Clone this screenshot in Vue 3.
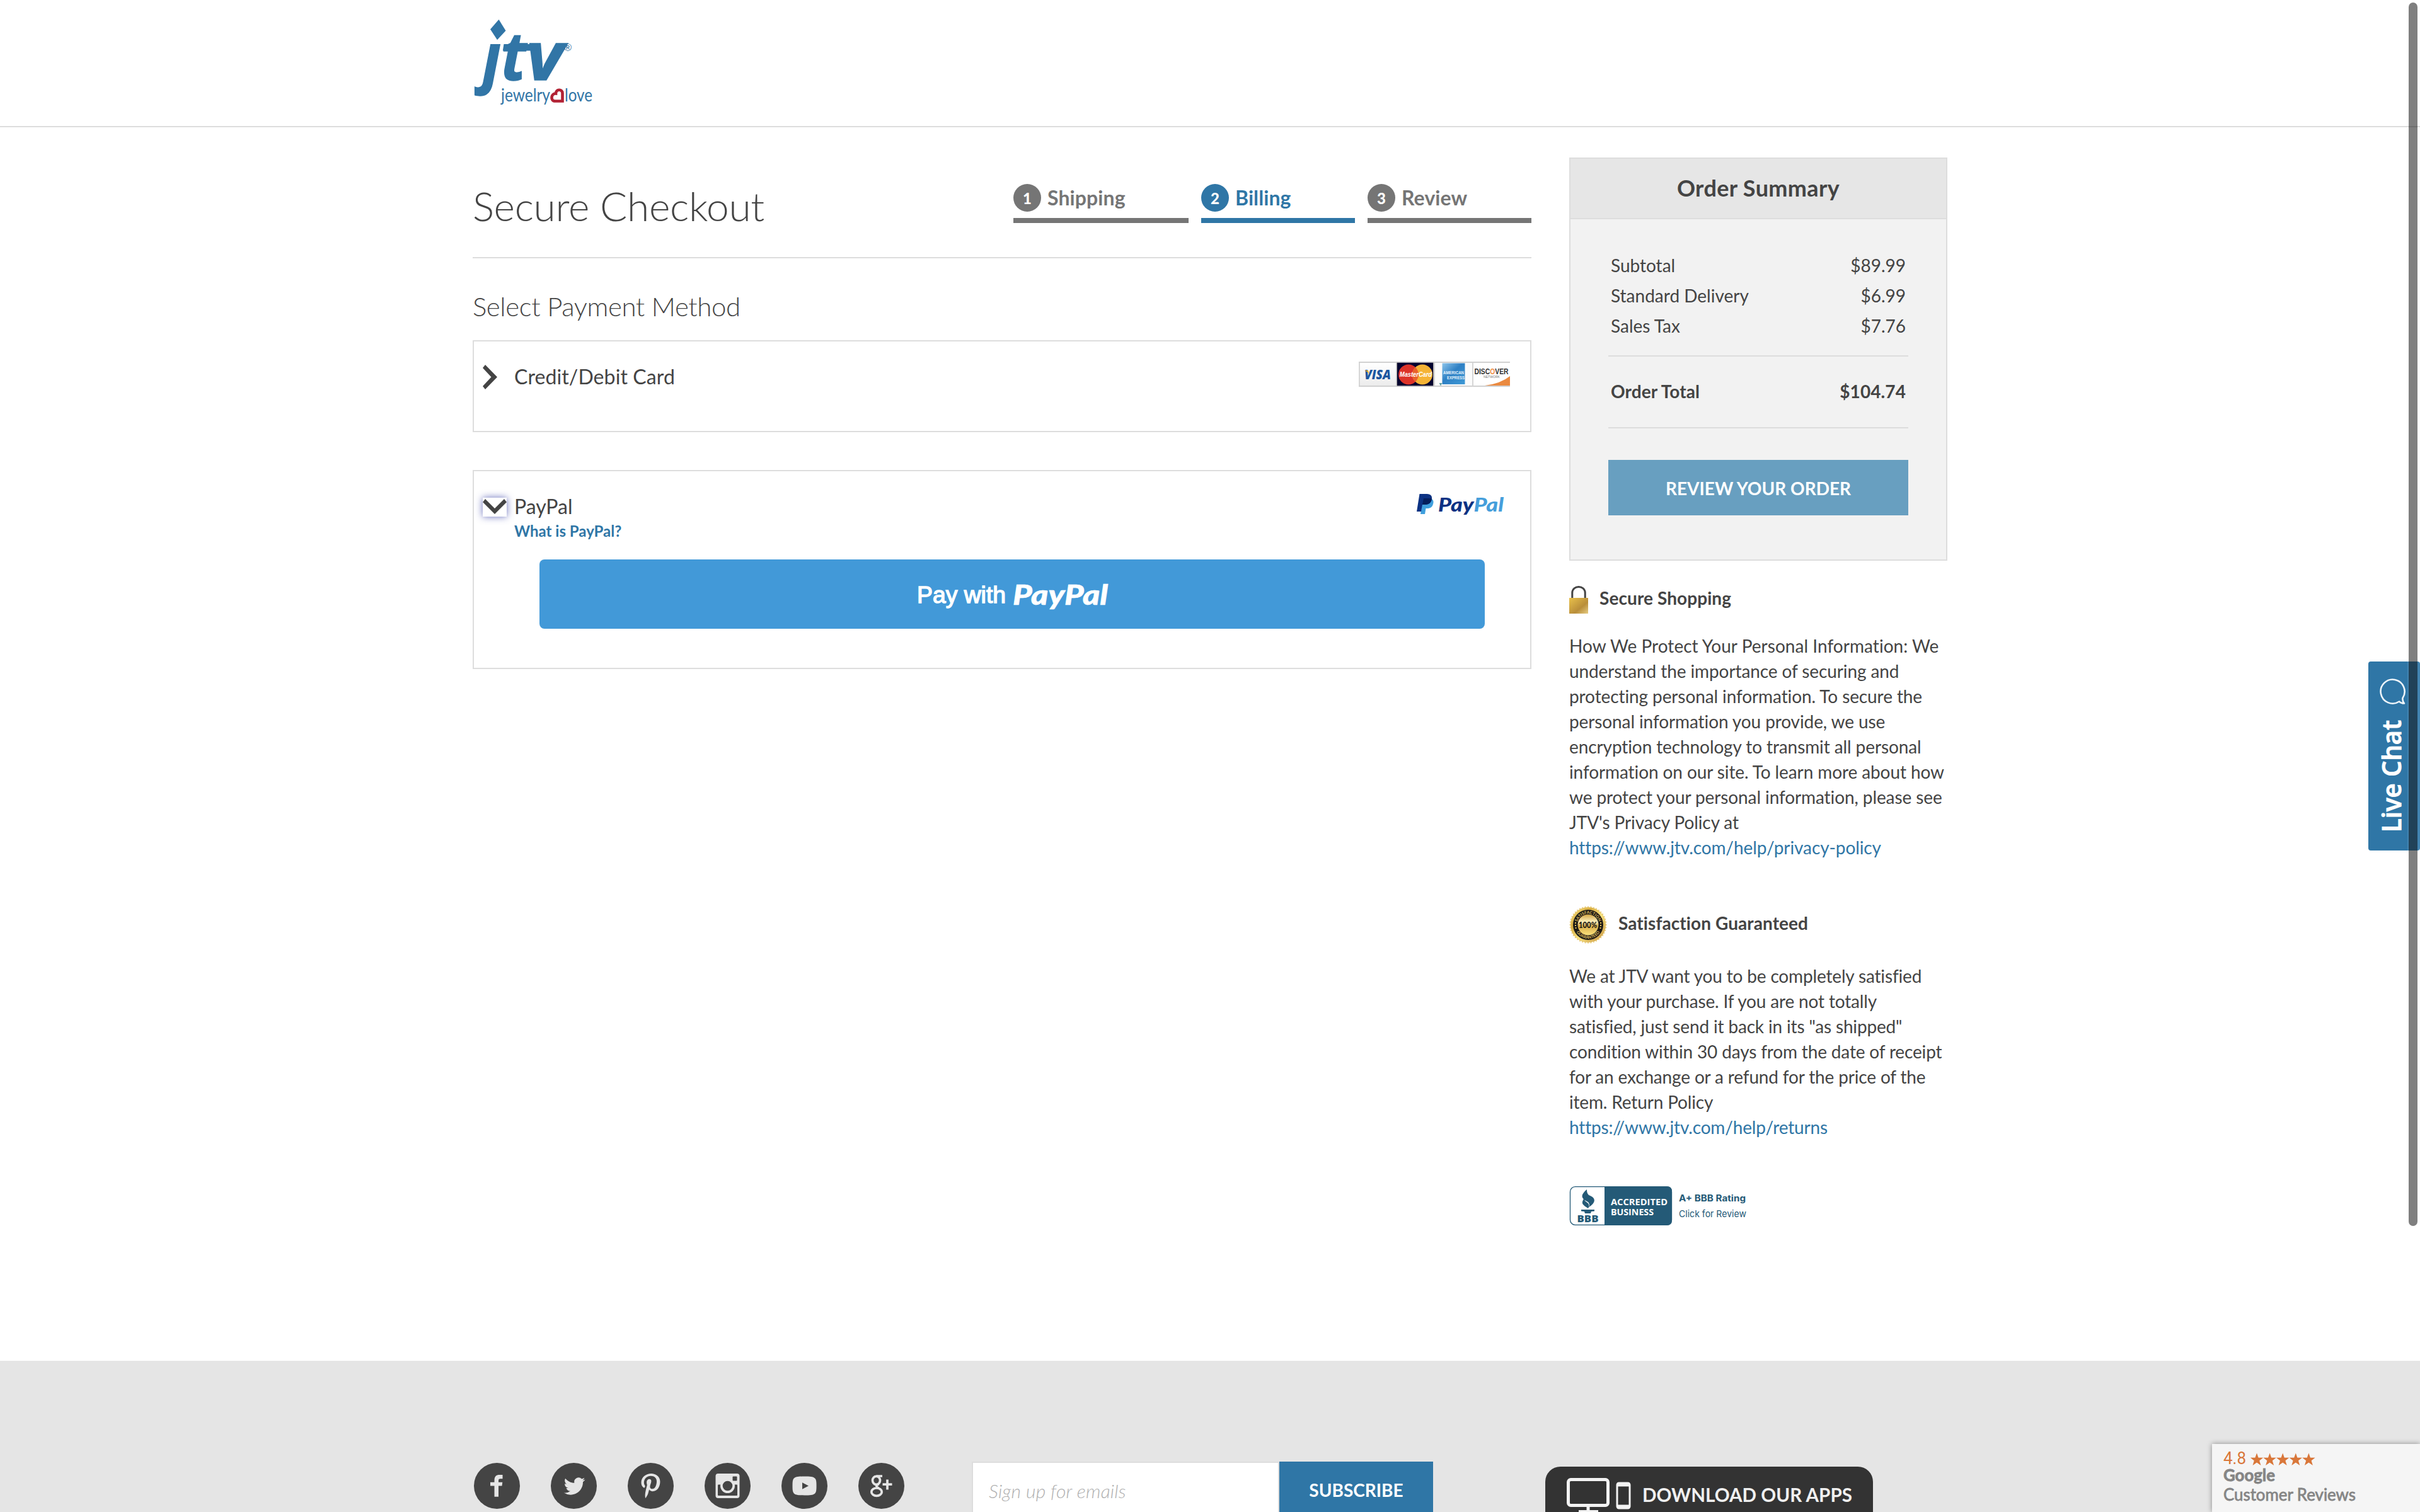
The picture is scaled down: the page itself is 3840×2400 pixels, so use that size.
<script setup>
const steps = [
  { n: 1, label: 'Shipping', cls: 'step-shipping' },
  { n: 2, label: 'Billing', cls: 'step-billing' },
  { n: 3, label: 'Review', cls: 'step-review' },
]
const lines = [
  { label: 'Subtotal', value: '$89.99' },
  { label: 'Standard Delivery', value: '$6.99' },
  { label: 'Sales Tax', value: '$7.76' },
]
const sealTeeth = Array.from({ length: 40 }, (_, i) => i * 9)
const starXs = [0, 20.6, 41.2, 61.8, 82.4]
</script>

<template>
  <div class="page">
    <header class="site-header">
      <svg class="logo" viewBox="0 0 200 150" aria-label="jtv jewelry love">
        <defs>
          <clipPath id="stem"><rect x="-10" y="41" width="80" height="90" /></clipPath>
        </defs>
        <path d="M38.500 2L49.500 19.800L36 34.300L25 17.500Z" fill="#3175a6" />
        <g class="logo-word">
          <text x="13" y="98" clip-path="url(#stem)" textLength="29" lengthAdjust="spacingAndGlyphs">j</text>
          <text x="42" y="98" textLength="40" lengthAdjust="spacingAndGlyphs">t</text>
          <text x="82" y="98" textLength="59" lengthAdjust="spacingAndGlyphs">v</text>
        </g>
        <path d="M46.500 41H100L98 51.500H44.800Z" fill="#3175a6" />
        <text class="logo-reg" x="142" y="52" textLength="12" lengthAdjust="spacingAndGlyphs">®</text>
        <text class="logo-tag" x="42" y="132" textLength="78" lengthAdjust="spacingAndGlyphs">jewelry</text>
        <path d="M139.500 131.500V119C139.500 112 129 112 129 119.500C121.500 119 119.500 131.500 128 131.500Z" fill="#fff" stroke="#b22234" stroke-width="4.600" />
        <text class="logo-tag" x="143" y="132" textLength="44" lengthAdjust="spacingAndGlyphs">love</text>
      </svg>
    </header>

    <div class="content">
      <main class="checkout">
        <div class="title-row">
          <h1>Secure Checkout</h1>
          <ol class="steps">
            <li v-for="s in steps" :key="s.n" :class="['step', s.cls]">
              <div class="step-head"><span class="badge">{{ s.n }}</span><span>{{ s.label }}</span></div>
            </li>
          </ol>
        </div>

        <h2>Select Payment Method</h2>

        <section class="method card-method">
          <span class="toggle">
            <svg width="23" height="39" viewBox="0 0 23 39"><path d="M4 0L23 19.500L4 39L0 34L13.500 19.500L0 5Z" fill="#444" /></svg>
          </span>
          <span class="method-name">Credit/Debit Card</span>
          <svg class="cards" width="240" height="40" viewBox="0 0 240 40">
            <defs>
              <linearGradient id="amex" x1="0" y1="0" x2="1" y2="1">
                <stop offset="0" stop-color="#8cc4ea" /><stop offset=".45" stop-color="#2f80c4" /><stop offset="1" stop-color="#3f9ad6" />
              </linearGradient>
              <linearGradient id="visabg" x1="0" y1="0" x2="0" y2="1">
                <stop offset="0" stop-color="#fff" /><stop offset="1" stop-color="#ececec" />
              </linearGradient>
            </defs>
            <rect width="240" height="40" fill="#d6d6d6" />
            <rect x="2" y="2" width="57" height="36" fill="url(#visabg)" />
            <text x="9" y="28" class="visa" textLength="42" lengthAdjust="spacingAndGlyphs">VISA</text>
            <path d="M9 14H15L17 21Q14 15 9 14Z" fill="#f0b323" />
            <rect x="60" width="59" height="40" fill="#a9a6a3" />
            <rect x="61" y="1" width="57" height="38" fill="#04032e" />
            <circle cx="79" cy="20.500" r="16" fill="#dc3329" />
            <circle cx="101" cy="20.500" r="16" fill="#f5b335" />
            <path d="M90 9A16 16 0 0 1 90 32A16 16 0 0 1 90 9Z" fill="#e9622c" />
            <text x="65" y="24" class="mc" textLength="51" lengthAdjust="spacingAndGlyphs">MasterCard</text>
            <rect x="121" y="2" width="59" height="36" fill="#fbfbfb" />
            <rect x="132.500" y="2.500" width="36" height="33.500" fill="url(#amex)" />
            <text x="134" y="20" class="amex" textLength="33" lengthAdjust="spacingAndGlyphs">AMERICAN</text>
            <text x="140" y="28" class="amex" textLength="28" lengthAdjust="spacingAndGlyphs">EXPRESS</text>
            <path d="M127.500 34H132.500L130 38.500Z" fill="#63a0a3" />
            <rect x="182" y="2" width="58" height="36" fill="#fff" />
            <path d="M200 38Q225 35 240 23V38Z" fill="#ea8a40" />
            <text x="183.500" y="20" class="disc" textLength="54" lengthAdjust="spacingAndGlyphs">DISC<tspan fill="#f09048">O</tspan>VER</text>
            <text x="198" y="26" class="net" textLength="26" lengthAdjust="spacingAndGlyphs">NETWORK</text>
            <path d="M0 1H240M0 39H240" stroke="#cfcfcf" stroke-width="1.500" />
          </svg>
        </section>

        <section class="method paypal-method">
          <div class="paypal-head">
            <span class="toggle">
              <span class="focus-box">
                <svg width="38" height="24" viewBox="0 0 38 24"><path d="M4 0L19 15L34 0L38 5L19 24L0 5Z" fill="#444" /></svg>
              </span>
            </span>
            <div class="method-text">
              <div class="method-name">PayPal</div>
              <a class="what">What is PayPal?</a>
            </div>
            <svg class="pp-logo" width="140" height="42" viewBox="0 0 140 42">
              <path d="M10 7H21C27 8 27.500 13 25.500 17.500C24 21.500 21 23 16.500 23H14.500L13 32H6Z" fill="#3f9fdd" />
              <path d="M4.500 0H16C22.500 0 25 3.500 23.800 9C22.500 14.500 19 17 13 17H9L7 28H0Z" fill="#0c3283" />
              <path d="M11 7H24C23.500 13.500 19.500 17 13 17H9Z" fill="#051f5c" />
              <text x="34" y="28" class="pp-word" textLength="104" lengthAdjust="spacingAndGlyphs"><tspan fill="#0c3283">Pay</tspan><tspan fill="#459edb">Pal</tspan></text>
            </svg>
          </div>
          <button class="pay-button" type="button">
            <svg width="304" height="56" viewBox="0 0 304 56">
              <text class="pay-with" x="1" y="42" textLength="141" lengthAdjust="spacingAndGlyphs">Pay with</text>
              <text class="pay-brand" x="153" y="44.500" textLength="151" lengthAdjust="spacingAndGlyphs">PayPal</text>
            </svg>
          </button>
        </section>
      </main>

      <aside class="sidebar">
        <section class="summary">
          <h3>Order Summary</h3>
          <div class="summary-body">
            <div class="rows">
              <div v-for="l in lines" :key="l.label" class="row"><span>{{ l.label }}</span><span>{{ l.value }}</span></div>
            </div>
            <div class="row total"><span>Order Total</span><span>$104.74</span></div>
            <button class="review-button" type="button">REVIEW YOUR ORDER</button>
          </div>
        </section>

        <div class="trust secure">
          <svg width="30" height="44" viewBox="0 0 30 44">
            <defs>
              <linearGradient id="lock" x1="0" y1="0" x2="1" y2="1">
                <stop offset="0" stop-color="#e9c14b" /><stop offset=".62" stop-color="#b98e3a" /><stop offset="1" stop-color="#e6cc83" />
              </linearGradient>
            </defs>
            <path d="M4.800 20V11C4.800-1.800 25.200-1.800 25.200 11V20" fill="none" stroke="#444" stroke-width="3" />
            <rect y="19" width="30" height="25" fill="url(#lock)" />
          </svg>
          <h4>Secure Shopping</h4>
        </div>
        <p class="secure-copy"><span class="lead">How We Protect Your Personal Information: We</span><br />understand the importance of securing and<br />protecting personal information. To secure the<br />personal information you provide, we use<br />encryption technology to transmit all personal<br />information on our site. To learn more about how<br />we protect your personal information, please see<br />JTV's Privacy Policy at<br /><a>https://www.jtv.com/help/privacy-policy</a></p>

        <div class="trust satisfaction">
          <svg width="60" height="60" viewBox="-30 -30 60 60">
            <defs>
              <linearGradient id="gold" x1="0" y1="0" x2="1" y2="1">
                <stop offset="0" stop-color="#fbe88f" /><stop offset=".3" stop-color="#d9ad3f" /><stop offset=".55" stop-color="#f8e27e" /><stop offset="1" stop-color="#c08a3a" />
              </linearGradient>
              <linearGradient id="goldface" x1="0" y1="0" x2="0" y2="1">
                <stop offset="0" stop-color="#d2a544" /><stop offset=".35" stop-color="#fdf0bd" /><stop offset=".55" stop-color="#d8ac4a" /><stop offset="1" stop-color="#fbe27b" />
              </linearGradient>
              <path id="arcTop" d="M-17.500 0A17.500 17.500 0 0 1 17.500 0" />
              <path id="arcBottom" d="M-22 0A22 22 0 0 0 22 0" />
            </defs>
            <circle r="28" fill="url(#gold)" />
            <path v-for="a in sealTeeth" :key="a" d="M-2 -27.500L0 -30L2 -27.500Z" fill="#e8cb7a" :transform="`rotate(${a})`" />
            <circle r="24" fill="#1d1a16" />
            <circle r="16.500" fill="url(#goldface)" />
            <text class="seal-ring"><textPath href="#arcTop" startOffset="50%">SATISFACTION</textPath></text>
            <text class="seal-ring"><textPath href="#arcBottom" startOffset="50%">GUARANTEED</textPath></text>
            <path d="M-21 -4h2v2h-2zM-21 0h2v2h-2zM-20.500 4h2v2h-2zM19 -4h2v2h-2zM19 0h2v2h-2zM18.500 4h2v2h-2z" fill="#e4c05a" />
            <text class="seal-num" x="-15" y="5" textLength="29" lengthAdjust="spacingAndGlyphs">100%</text>
          </svg>
          <h4>Satisfaction Guaranteed</h4>
        </div>
        <p class="satisfaction-copy">We at JTV want you to be completely satisfied<br />with your purchase. If you are not totally<br />satisfied, just send it back in its "as shipped"<br />condition within 30 days from the date of receipt<br />for an exchange or a refund for the price of the<br />item. Return Policy<br /><a>https://www.jtv.com/help/returns</a></p>

        <svg class="bbb" width="290" height="62" viewBox="0 0 290 62">
          <rect x="1.500" y=".7" width="161" height="60.600" rx="8" fill="#fff" stroke="#245a77" stroke-width="1.300" />
          <path d="M56 0H155Q163 0 163 8V54Q163 62 155 62H56Z" fill="#245a77" />
          <path d="M29 5C17 15 21 20 31 25C35 30 32 33 31 34C45 25 43 18 32 14C29 11 29 8 29 5Z" fill="#245a77" transform="translate(-1)" />
          <path d="M24 19C17 28 23 30 30 35C33 30 31 27 26 24C24 22 24 21 24 19Z" fill="#245a77" />
          <path d="M19 37H40V39.500L35 40L34 43H25L24 40L19 39.500Z" fill="#245a77" />
          <text class="bbb-name" x="12.500" y="57" textLength="34" lengthAdjust="spacingAndGlyphs">BBB</text>
          <text class="bbb-acc" x="66" y="30" textLength="90" lengthAdjust="spacingAndGlyphs">ACCREDITED</text>
          <text class="bbb-acc" x="66" y="46" textLength="68" lengthAdjust="spacingAndGlyphs">BUSINESS</text>
          <text class="bbb-rating" x="174" y="23.500" textLength="106" lengthAdjust="spacingAndGlyphs">A+ BBB Rating</text>
          <text class="bbb-click" x="174" y="49" textLength="107" lengthAdjust="spacingAndGlyphs">Click for Review</text>
        </svg>
      </aside>
    </div>

    <footer class="footer">
      <div class="social">
        <svg viewBox="-36.500 -36.500 73 73"><circle r="36.500" /><path d="M-4 17.300V0h-6.500v-5.700h6.500v-3.300c0-6 3-8.500 8-8.500h5v6.300h-3.500c-2.300 0-3 1-3 3v2.500h6.300l-.8 5.700h-5.500v17.300z" /></svg>
        <svg viewBox="-36.500 -36.500 73 73"><circle r="36.500" /><path transform="translate(-15.700 -16.300) scale(1.400)" d="M23.953 4.570a10 10 0 01-2.825.775 4.958 4.958 0 002.163-2.723c-.951.555-2.005.959-3.127 1.184a4.920 4.920 0 00-8.384 4.482C7.690 8.095 4.067 6.130 1.640 3.162a4.822 4.822 0 00-.666 2.475c0 1.710.870 3.213 2.188 4.096a4.904 4.904 0 01-2.228-.616v.06a4.923 4.923 0 003.946 4.827 4.996 4.996 0 01-2.212.085 4.936 4.936 0 004.604 3.417 9.867 9.867 0 01-6.102 2.105c-.39 0-.779-.023-1.170-.067a13.995 13.995 0 007.557 2.209c9.053 0 13.998-7.496 13.998-13.985 0-.21 0-.42-.015-.63A9.935 9.935 0 0024 4.590z" /></svg>
        <svg viewBox="-36.500 -36.500 73 73"><circle r="36.500" /><path transform="translate(-15 -20) scale(.078)" d="M204 6.500C101.400 6.500 0 74.900 0 185.600 0 256 39.600 296 63.600 296c9.900 0 15.600-27.600 15.600-35.400 0-9.300-23.700-29.100-23.700-67.800 0-80.400 61.200-137.400 140.400-137.400 68.100 0 118.500 38.700 118.500 109.800 0 53.100-21.300 152.700-90.300 152.700-24.900 0-46.200-18-46.200-43.800 0-37.800 26.400-74.400 26.400-113.400 0-66.200-93.900-54.200-93.900 25.800 0 16.800 2.100 35.400 9.600 50.700-13.800 59.400-42 147.900-42 209.100 0 18.900 2.700 37.500 4.500 56.400 3.400 3.800 1.700 3.400 6.900 1.500 50.400-69 48.600-82.500 71.400-172.800 12.300 23.400 44.100 36 69.300 36 106.200 0 153.900-103.500 153.900-196.800C384 71.300 298.200 6.500 204 6.500z" /></svg>
        <svg viewBox="-36.500 -36.500 73 73"><circle r="36.500" /><rect class="lite" x="-19" y="-19.500" width="38" height="39" rx="4" /><rect class="dark" x="-15.500" y="-2" width="31" height="17.500" rx="1" /><circle class="lite" r="11.500" /><circle class="dark" r="7.800" /><rect class="dark" x="8" y="-15" width="7" height="7" rx="1" /></svg>
        <svg viewBox="-36.500 -36.500 73 73"><circle r="36.500" /><path d="M-19 0C-19-13-18-15 0-15S19-13 19 0S18 15 0 15S-19 13-19 0Z" /><path class="dark" d="M-3.500 -5.200L6.500 0L-3.500 5.200Z" /></svg>
        <svg viewBox="-36.500 -36.500 73 73"><circle r="36.500" /><g class="line"><ellipse cx="-8" cy="-8.700" rx="6" ry="6.500" /><ellipse cx="-7.500" cy="9.700" rx="8.200" ry="6.200" /><path d="M-8 -15.500H1.500M-4 -3C-10 0-8 1-4.500 3.800M2 -2.300H17M9.500 -10V6" /></g></svg>
      </div>
      <form class="signup">
        <div class="email">Sign up for emails</div>
        <button type="button">SUBSCRIBE</button>
      </form>
      <div class="apps">
        <svg width="104" height="72" viewBox="0 0 104 72" fill="none" stroke="#f3f3f3">
          <rect x="2.500" y="2.500" width="63" height="41" rx="4" stroke-width="5" />
          <path d="M34 44V52M19 53.500H50" stroke-width="5" />
          <rect x="80" y="8" width="20" height="40" rx="3" stroke-width="3" />
          <path d="M80 10.500H100M80 45.500H100" stroke-width="6" />
        </svg>
        <svg width="340" height="44" viewBox="0 0 340 44"><text class="apps-text" x="-2" y="38" textLength="333" lengthAdjust="spacingAndGlyphs">DOWNLOAD OUR APPS</text></svg>
      </div>
    </footer>

    <div class="reviews">
      <svg width="330" height="108" viewBox="0 0 330 108">
        <text class="score" x="18" y="32" textLength="36" lengthAdjust="spacingAndGlyphs">4.8</text>
        <path v-for="x in starXs" :key="x" :transform="`translate(${71 + x} 24.500)`" fill="#d9773a" d="M-10.200 -2.800H-2.600L0 -10L2.600 -2.800H10.200L4.200 1.900L6.500 9.500L0 5L-6.500 9.500L-4.200 1.900Z" />
        <text class="rev bold" x="18" y="59" textLength="82" lengthAdjust="spacingAndGlyphs">Google</text>
        <text class="rev" x="18" y="90" textLength="210" lengthAdjust="spacingAndGlyphs">Customer Reviews</text>
      </svg>
    </div>

    <div class="chat">
      <svg width="82" height="300" viewBox="0 0 82 300">
        <path d="M54.500 58A19 19 0 1 0 49 63.500C51 65.500 54 66.500 57 66.500C55 64 54 61 54.500 58Z" fill="none" stroke="#eef5fa" stroke-width="2.600" stroke-linejoin="round" />
        <text transform="translate(52 271) rotate(-90)" textLength="178" lengthAdjust="spacingAndGlyphs">Live Chat</text>
      </svg>
    </div>
    <div class="scrollbar"></div>
  </div>
</template>

<style>
body {
  margin: 0;
  background: #fff;
}
</style>

<style scoped>
.page {
  position: relative;
  width: 3840px;
  height: 2400px;
  overflow: hidden;
  background: #fff;
  color: #444;
  font-family: Lato, "Liberation Sans", sans-serif;
  font-size: 28px;
  line-height: 40px;
}
.page * { box-sizing: border-box; }
h1, h2, h3, h4, p, ol { margin: 0; padding: 0; }
svg { display: block; flex: none; overflow: visible; }
button { border: 0; padding: 0; margin: 0; font-family: inherit; }

.site-header {
  height: 202px;
  border-bottom: 2px solid #ddd;
  padding: 29px 0 0 753px;
}
.logo { width: 200px; height: 150px; }
.logo-word {
  font: italic 700 105px "Noto Sans", sans-serif;
  fill: #3175a6;
  stroke: #3175a6;
  stroke-width: 1.5px;
}
.logo-reg { font: 400 16px "Liberation Sans", sans-serif; fill: #3175a6; }
.logo-tag { font: 400 28px Lato, sans-serif; fill: #3175a6; }

.content {
  display: flex;
  gap: 60px;
  height: 1958px;
  padding-left: 750px;
}
.checkout { width: 1680px; }
.title-row {
  display: flex;
  justify-content: space-between;
  align-items: flex-start;
  height: 208px;
  padding-top: 85px;
  border-bottom: 2px solid #ddd;
}
h1 { font-size: 64px; font-weight: 300; line-height: 80px; letter-spacing: -.3px; }
.steps { display: flex; gap: 20px; margin-top: 5px; list-style: none; }
.step {
  height: 62px;
  border-bottom: 8px solid #757575;
  color: #757575;
  font-size: 32px;
  font-weight: 700;
}
.step-shipping { width: 278px; }
.step-billing { width: 244px; color: #2f76a6; border-color: #2f76a6; }
.step-review { width: 260px; }
.step-head { display: flex; align-items: center; gap: 10px; height: 44px; letter-spacing: .1px; }
.badge {
  width: 44px;
  height: 44px;
  border-radius: 50%;
  background: #757575;
  color: #fff;
  font-size: 24px;
  font-weight: 900;
  line-height: 45px;
  text-align: center;
}
.step-billing .badge { background: #2f76a6; }
h2 { margin-top: 51px; font-size: 42px; font-weight: 300; line-height: 50px; letter-spacing: -.4px; }

.method { border: 2px solid #ddd; font-size: 32px; }
.card-method {
  display: flex;
  align-items: flex-start;
  height: 146px;
  margin-top: 29px;
  padding: 32px 32px 0 14px;
}
.toggle { flex: none; width: 50px; padding-top: 5px; }
.card-method .method-name { margin-top: 4px; letter-spacing: .1px; }
.cards { margin-left: auto; }
.visa { font: italic 900 21px "Open Sans", sans-serif; fill: #1b56a0; }
.mc { font: italic 700 11px "Liberation Sans", sans-serif; fill: #fff; }
.amex { font: 700 8px "Liberation Sans", sans-serif; fill: #e5f2fb; }
.disc { font: 700 12.5px "Liberation Sans", sans-serif; fill: #333; }
.net { font: 400 5px "Liberation Sans", sans-serif; fill: #777; }
.paypal-method { height: 316px; margin-top: 60px; padding: 36px 0 0 14px; }
.paypal-head { display: flex; align-items: flex-start; }
.paypal-head .toggle { padding-top: 6px; }
.focus-box {
  display: block;
  width: 38px;
  height: 30px;
  padding-top: 2px;
  background: #fff;
  box-shadow: 0 0 12px rgba(40, 50, 160, .7);
}
.what {
  display: block;
  margin-top: 3px;
  color: #2f76a6;
  font-size: 24px;
  font-weight: 700;
  line-height: 32px;
}
.pp-logo { margin: 0 40px 0 auto; }
.pp-word { font: italic 900 31px Lato, sans-serif; }
.pay-button {
  display: flex;
  justify-content: center;
  width: 1500px;
  height: 110px;
  margin: 29px 0 0 90px;
  padding-top: 27px;
  border-radius: 8px;
  background: #4299d8;
}
.pay-with { font: 400 36px "Liberation Sans", sans-serif; fill: #fff; stroke: #fff; stroke-width: 1.4px; }
.pay-brand { font: italic 900 44px Lato, sans-serif; fill: #fff; stroke: #fff; stroke-width: .6px; }

.sidebar { width: 600px; padding-top: 48px; }
.summary { height: 640px; border: 2px solid #ddd; background: #f2f2f2; }
h3 {
  height: 96px;
  border-bottom: 2px solid #ddd;
  background: #e6e6e6;
  font-size: 36px;
  font-weight: 700;
  letter-spacing: .35px;
  line-height: 93px;
  text-align: center;
}
.summary-body { padding: 0 60px; }
.rows { height: 218px; padding-top: 50px; border-bottom: 2px solid #ddd; }
.row { display: flex; justify-content: space-between; height: 48px; padding: 0 4px; line-height: 47px; }
.row.total { height: 114px; border-bottom: 2px solid #ddd; line-height: 111px; font-weight: 700; letter-spacing: .1px; }
.review-button {
  display: block;
  width: 476px;
  height: 88px;
  margin-top: 50px;
  background: #689fc0;
  color: #fff;
  font-size: 28px;
  font-weight: 700;
  line-height: 90px;
}
.trust { display: flex; align-items: center; gap: 18px; }
h4 { font-size: 28px; font-weight: 700; line-height: 40px; letter-spacing: .08px; }
.secure { height: 44px; margin-top: 40px; }
.secure h4 { margin-bottom: 6px; }
.secure-copy { margin-top: 31px; letter-spacing: -.1px; }
.lead { letter-spacing: .04px; }
p { white-space: nowrap; }
a { color: #2f76a6; }
.satisfaction { height: 60px; margin-top: 73px; }
.satisfaction h4 { margin-bottom: 6px; }
.satisfaction-copy { margin-top: 31px; letter-spacing: -.16px; }
.seal-ring { font: 700 6.5px Lato, sans-serif; fill: #d9b75a; text-anchor: middle; }
.seal-num { font: 900 13px Lato, sans-serif; fill: #1d1a16; }
.bbb { margin-top: 74px; }
.bbb-name { font: 900 15px "Open Sans", sans-serif; fill: #245a77; }
.bbb-acc { font: 700 14px "Open Sans", sans-serif; fill: #fff; }
.bbb-rating { font: 700 14px Inter, sans-serif; fill: #245a77; }
.bbb-click { font: 400 15px Inter, sans-serif; fill: #245a77; }

.footer {
  display: flex;
  align-items: flex-start;
  height: 240px;
  padding: 160px 0 0 752px;
  background: #e5e5e5;
}
.social { display: flex; gap: 49px; width: 790px; padding-top: 2px; }
.social svg { width: 73px; height: 73px; fill: #e5e5e5; }
.social svg > circle:first-child, .social .dark { fill: #444; }
.line { fill: none; stroke: #e5e5e5; stroke-width: 3.7px; }
.signup { display: flex; width: 732px; height: 88px; }
.email {
  width: 488px;
  padding-left: 25px;
  border: 2px solid #ddd;
  background: #fff;
  color: #b0b0b0;
  font-size: 30px;
  font-style: italic;
  font-weight: 300;
  letter-spacing: .2px;
  line-height: 89px;
}
.signup button {
  width: 244px;
  background: #2f76a6;
  color: #fff;
  font-size: 28px;
  font-weight: 700;
  line-height: 90px;
}
.apps {
  display: flex;
  align-items: flex-start;
  gap: 18px;
  width: 520px;
  height: 100px;
  margin: 8px 0 0 178px;
  padding: 18px 0 0 34px;
  border-radius: 24px 24px 0 0;
  background: #333;
}
.apps-text { font: 700 30px Lato, sans-serif; fill: #f0f0f0; }

.reviews {
  position: absolute;
  left: 3510px;
  top: 2292px;
  width: 330px;
  height: 108px;
  background: #f5f5f5;
  box-shadow: 0 0 8px rgba(0, 0, 0, .4);
}
.score { font: 400 27px Roboto, sans-serif; fill: #d9773a; }
.rev { font: 400 27px Lato, sans-serif; fill: #858585; stroke: #858585; stroke-width: .8px; }
.rev.bold { font-weight: 700; }
.chat {
  position: absolute;
  left: 3758px;
  top: 1050px;
  width: 82px;
  height: 300px;
  border-radius: 4px;
  background: linear-gradient(90deg, #2f76a6 62px, #4284b1 62px);
}
.chat text { font: 600 41px "Open Sans", sans-serif; fill: #fff; stroke: #fff; stroke-width: 1px; }
.scrollbar {
  position: absolute;
  left: 3822px;
  top: 4px;
  width: 14px;
  height: 1942px;
  border-radius: 7px;
  background: rgba(0, 0, 0, .5);
}
</style>
